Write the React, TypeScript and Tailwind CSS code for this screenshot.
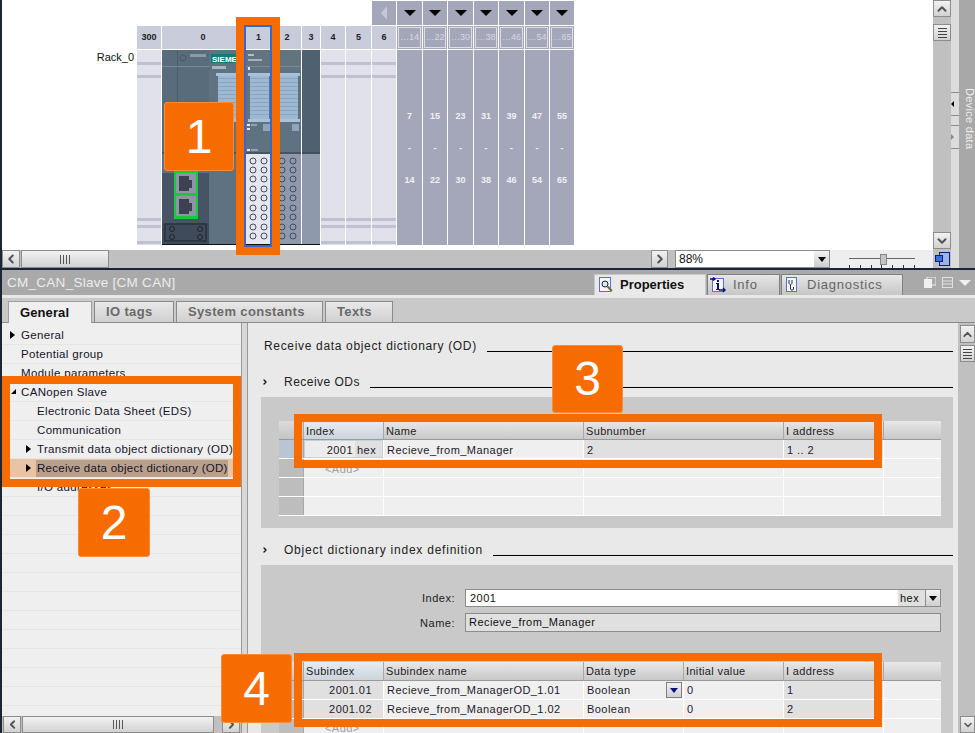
import { ChevronLeft, ChevronRight, ChevronUp, ChevronDown } from 'lucide-react';
import type { ReactNode } from 'react';

const font = { fontFamily: '"Liberation Sans", Arial, sans-serif' };

const slotHeaders = [
  { label: '300', w: 'w-[24px]' },
  { label: '0', w: 'w-[82px]' },
  { label: '1', w: 'w-[27px]' },
  { label: '2', w: 'w-[28px]' },
  { label: '3', w: 'w-[18px]' },
  { label: '4', w: 'w-[24px]' },
  { label: '5', w: 'w-[25px]' },
  { label: '6', w: 'w-[24px]' },
];

const expansion = [
  { range: '…14', from: '7', to: '14', w: 'w-[25px]' },
  { range: '…22', from: '15', to: '22', w: 'w-[24px]' },
  { range: '…30', from: '23', to: '30', w: 'w-[25px]' },
  { range: '…38', from: '31', to: '38', w: 'w-[24px]' },
  { range: '…46', from: '39', to: '46', w: 'w-[25px]' },
  { range: '…54', from: '47', to: '54', w: 'w-[24px]' },
  { range: '…65', from: '55', to: '65', w: 'w-[24px]' },
];

const circleRows = [111, 120, 129, 139, 148, 158, 167, 177, 186];

function EmptySlot({ w }: { w: string }) {
  return (
    <div className={`${w} flex h-full flex-col bg-[#e0e1ea]`}>
      <div className="mt-[12px] h-[3px] bg-[#bfc0d0]" />
      <div className="mt-[10px] h-[3px] bg-[#bfc0d0]" />
      <div className="mt-[140px] h-[3px] bg-[#bfc0d0]" />
      <div className="mt-[4px] h-[3px] bg-[#bfc0d0]" />
      <div className="mt-[13px] h-[3px] bg-[#bfc0d0]" />
    </div>
  );
}

function HeatSink({ x, w }: { x: number; w: number }) {
  const stripes = [];
  for (let y = 28; y < 68; y += 4) {
    stripes.push(<rect key={y} x={x + 2} y={y} width={w - 4} height="1" fill="#8aa6c2" />);
  }
  return (
    <g>
      <rect x={x} y={23} width={w} height={3} fill="#a9c2da" />
      <rect x={x + 2} y={26} width={w - 4} height={43} fill="#9db8d2" />
      {stripes}
      <rect x={x} y={69} width={w} height={3} fill="#a9c2da" />
    </g>
  );
}

function Port({ y }: { y: number }) {
  return (
    <g>
      <rect x={14} y={y} width={20} height={20} fill="#8f95a6" />
      <path d={`M17 ${y + 3}h10v4h3v8h-3v3h-10z`} fill="#3e4150" />
    </g>
  );
}

function RackModules() {
  return (
    <svg width="158" height="195" viewBox="0 0 158 195" className="block">
      <rect width="139" height="195" fill="#5f7282" />
      <rect x="0" width="47" height="102" fill="#596c7c" />
      <rect x="15" width="1" height="102" fill="#4c5c6b" />
      <rect x="0" y="16" width="47" height="1" fill="#7a8a99" />
      <circle cx="21" cy="8" r="3" fill="none" stroke="#48586a" />
      <rect x="28" y="4" width="16" height="3" fill="#8d9aa6" />
      <rect x="49" y="4" width="35" height="9" fill="#137a7a" />
      <text x="50" y="12" fontSize="8" fontWeight="700" fill="#fff" style={font}>SIEMENS</text>
      <rect x="50" y="16" width="14" height="3" fill="#a8b4c0" />
      <rect x="84" y="0" width="55" height="20" fill="#62747f" />
      <rect x="86" y="4" width="6" height="2" fill="#b4bec8" />
      <rect x="86" y="9" width="14" height="2" fill="#a4b0bc" />
      <rect x="84" y="16" width="55" height="1" fill="#7a8a99" />
      <rect x="86" y="17" width="2" height="3" fill="#e6e8ee" />
      <HeatSink x={54} w={30} />
      <HeatSink x={86} w={23} />
      <HeatSink x={110} w={28} />
      <rect x="85" y="74" width="3" height="2" fill="#e6e8ee" />
      <rect x="85" y="78" width="3" height="2" fill="#e6e8ee" />
      <rect x="89" y="74" width="6" height="2" fill="#95a3b1" />
      <rect x="101" y="74" width="8" height="7" fill="#8fa5ba" />
      <rect x="130" y="74" width="7" height="7" fill="#8fa5ba" />
      <rect x="85" y="99" width="3" height="2" fill="#e6e8ee" />
      <rect x="89" y="99" width="7" height="2" fill="#95a3b1" />
      <rect x="0" y="102" width="139" height="2" fill="#4a5562" />
      <rect x="0" y="123" width="47" height="51" fill="#475465" />
      <rect x="0" y="104" width="47" height="19" fill="#5f7282" />
      <rect x="0" y="173" width="47" height="22" fill="#3f4a5a" />
      <rect x="3" y="174" width="41" height="17" fill="none" stroke="#20242f" />
      {[[10, 179], [38, 179], [10, 187], [38, 187]].map(([cx, cy]) => (
        <circle key={`${cx}-${cy}`} cx={cx} cy={cy} r="2.5" fill="none" stroke="#20242f" />
      ))}
      <rect x="12" y="121" width="24" height="48" fill="#17c93c" />
      <Port y={123} />
      <Port y={146} />
      <rect x="83" y="104" width="27" height="91" fill="#e5e6ee" />
      <rect x="110" y="104" width="29" height="91" fill="#8e9aab" />
      {circleRows.map((cy) => (
        <g key={cy} fill="none" stroke="#444c5c">
          <circle cx="91" cy={cy} r="3" />
          <circle cx="102" cy={cy} r="3" />
          <circle cx="120" cy={cy} r="3" />
          <circle cx="131" cy={cy} r="3" />
        </g>
      ))}
      <rect x="139" width="1" height="195" fill="#fff" />
      <rect x="140" width="18" height="102" fill="#4f6070" />
      <rect x="140" y="102" width="18" height="2" fill="#434e5b" />
      <rect x="140" y="104" width="18" height="91" fill="#8e9aab" />
      <rect x="0" y="194" width="158" height="1" fill="#111" />
    </svg>
  );
}

function ScrollButton({ children, className }: { children: ReactNode; className: string }) {
  return (
    <div className={`flex items-center justify-center border border-[#8c8c8c] bg-linear-to-b from-[#f2f2f2] to-[#d2d2d2] text-[#555] ${className}`}>
      {children}
    </div>
  );
}

function GripV() {
  return (
    <div className="flex gap-[2px]">
      <span className="h-[9px] w-px bg-[#555]" />
      <span className="h-[9px] w-px bg-[#555]" />
      <span className="h-[9px] w-px bg-[#555]" />
      <span className="h-[9px] w-px bg-[#555]" />
    </div>
  );
}

function GripH() {
  return (
    <div className="flex flex-col gap-[2px]">
      <span className="h-px w-[9px] bg-[#444]" />
      <span className="h-px w-[9px] bg-[#444]" />
      <span className="h-px w-[9px] bg-[#444]" />
      <span className="h-px w-[9px] bg-[#444]" />
    </div>
  );
}

function CanvasPanel() {
  return (
    <div className="flex h-[268px] shrink-0">
      <div className="flex w-[931px] shrink-0 flex-col">
        <div className="flex h-[250px] bg-white">
          <div className="w-[135px] shrink-0 pr-[3px] pt-[50px] text-right text-[11px] leading-[15px] text-[#111]">Rack_0</div>
          <div className="flex flex-col pt-px">
            <div className="ml-[235px] flex h-[24px] gap-px">
              <div className="flex w-[24px] items-center justify-center bg-[#a4a7ba]">
                <div className="h-0 w-0 border-y-[7px] border-r-[6px] border-y-transparent border-r-[#c5c7d4]" />
              </div>
              {expansion.map((c) => (
                <div key={c.range} className={`${c.w} flex items-center justify-center bg-[#a4a7ba]`}>
                  <div className="h-0 w-0 border-x-[6px] border-t-[6px] border-x-transparent border-t-black" />
                </div>
              ))}
            </div>
            <div className="mt-px flex h-[23px] gap-px">
              {slotHeaders.map((s) => (
                <div key={s.label} className={`${s.w} flex items-center justify-center bg-[#c9ccda] text-[9px] font-bold text-[#222]`}>{s.label}</div>
              ))}
              {expansion.map((c) => (
                <div key={c.range} className={`${c.w} bg-[#a4a7ba] p-px`}>
                  <div className="flex h-full items-center justify-center border border-[#dcdde5] text-[9px] text-[#d6d7e0]">{c.range}</div>
                </div>
              ))}
            </div>
            <div className="mt-px flex h-[195px] gap-px">
              <EmptySlot w="w-[24px]" />
              <RackModules />
              <EmptySlot w="w-[24px]" />
              <EmptySlot w="w-[25px]" />
              <EmptySlot w="w-[24px]" />
              {expansion.map((c) => (
                <div key={c.range} className={`${c.w} flex flex-col items-center bg-[#a4a7ba] pt-[59px] text-[9px] font-bold leading-[14px] text-[#f0f0f4]`}>
                  <span>{c.from}</span>
                  <span className="mt-[18px]">-</span>
                  <span className="mt-[18px]">{c.to}</span>
                </div>
              ))}
            </div>
          </div>
        </div>
        <div className="flex h-[18px] items-stretch bg-[#c0c0c0]">
          <ScrollButton className="w-[18px]"><ChevronLeft size={14} strokeWidth={3.5} /></ScrollButton>
          <ScrollButton className="ml-px w-[88px]"><GripV /></ScrollButton>
          <div className="w-[542px]" />
          <ScrollButton className="w-[17px]"><ChevronRight size={14} strokeWidth={3.5} /></ScrollButton>
          <div className="ml-[7px] flex w-[155px] border border-[#8c8c8c] bg-white">
            <span className="flex-1 pl-[3px] text-[12px] leading-[16px] text-[#111]">88%</span>
            <div className="flex w-[15px] items-center justify-center bg-linear-to-b from-[#f2f2f2] to-[#cfcfcf]">
              <div className="h-0 w-0 border-x-[4px] border-t-[5px] border-x-transparent border-t-black" />
            </div>
          </div>
          <div className="relative flex-1 bg-[#eeeeee]">
            <div className="absolute left-[19px] top-[8px] h-px w-[66px] bg-[#666]" />
            <div className="absolute left-[50px] top-[4px] h-[11px] w-[7px] border border-[#888] bg-[#c4c4c4]" />
            <div className="absolute bottom-0 left-[19px] flex w-[66px] justify-between">
              {[0, 1, 2, 3, 4, 5, 6].map((t) => (
                <span key={t} className="h-[3px] w-px bg-[#333]" />
              ))}
            </div>
          </div>
        </div>
      </div>
      <div className="flex w-[18px] shrink-0 flex-col bg-[#c0c0c0]">
        <ScrollButton className="h-[17px]"><ChevronUp size={14} strokeWidth={3.5} /></ScrollButton>
        <ScrollButton className="mt-[7px] h-[17px]"><GripH /></ScrollButton>
        <ScrollButton className="mt-[191px] h-[17px]"><ChevronDown size={14} strokeWidth={3.5} /></ScrollButton>
        <div className="flex flex-1 items-center justify-center bg-[#c0c0c0]">
          <svg width="15" height="14" viewBox="0 0 15 14">
            <rect x="4.5" y="0.5" width="10" height="13" fill="#9ab4e8" stroke="#0a1f7a" />
            <rect x="0.5" y="3.5" width="7" height="6" fill="#3c6ee0" stroke="#0a1f7a" />
          </svg>
        </div>
      </div>
      <div className="flex w-[8px] shrink-0 flex-col bg-[#dcdcdc] pt-[92px]">
        <div className="flex h-[24px] items-center border-y border-[#8c8c8c]">
          <div className="h-0 w-0 border-y-[3px] border-r-[3px] border-y-transparent border-r-black" />
        </div>
        <div className="mt-[9px] flex h-[24px] items-center border-y border-[#8c8c8c]">
          <div className="h-0 w-0 border-y-[3px] border-l-[3px] border-y-transparent border-l-[#888]" />
        </div>
      </div>
      <div className="flex flex-1 justify-center bg-[#a8a8a8] pl-[3px] pt-[88px]">
        <span className="h-fit text-[11px] leading-[16px] tracking-[0.3px] text-[#ececec] [writing-mode:vertical-rl]">Device data</span>
      </div>
    </div>
  );
}

function InspectorTab({ icon, label, active, w }: { icon: ReactNode; label: string; active?: boolean; w: string }) {
  return (
    <div className={`${w} flex h-[21px] items-center border-x border-t pl-[2px] text-[13px] ${active ? 'gap-[6px] border-[#c8c8c8] bg-[#e9e9e9] font-bold tracking-[0px] text-[#111]' : 'gap-[7px] border-[#808080] bg-linear-to-b from-[#e6e6e6] to-[#c6c6c6] tracking-[0.75px] text-[#666]'}`}>
      {icon}
      <span>{label}</span>
    </div>
  );
}

function PropertiesIcon() {
  return (
    <svg width="16" height="16" viewBox="0 0 16 16" className="ml-[1px]">
      <rect x="1.5" y="0.5" width="11" height="14" fill="#f4f6ff" stroke="#5a6fd0" />
      <circle cx="7" cy="7" r="3" fill="#dfe8f8" stroke="#222" />
      <path d="M9.5 9.5l4.5 4.5" stroke="#666" strokeWidth="2" />
    </svg>
  );
}

function InfoIcon() {
  return (
    <svg width="16" height="16" viewBox="0 0 16 16">
      <rect x="2.5" y="1.5" width="11" height="13" fill="#f4f6ff" stroke="#5a6fd0" />
      <path d="M0 2h4M3 0.5l2 1.5-2 1.5M9 13h6M13 11l2 2-2 2" stroke="#101060" strokeWidth="1.4" fill="none" />
      <path d="M7 3h2v2h-2zM6 6h3v6h1v1h-4v-1h1v-5h-1z" fill="#101060" />
    </svg>
  );
}

function DiagnosticsIcon() {
  return (
    <svg width="16" height="16" viewBox="0 0 16 16">
      <rect x="2.5" y="0.5" width="10" height="14" fill="#f4f6ff" stroke="#5a6fd0" />
      <path d="M5 3v3c0 2 3 2 3 0V3M6.5 8v4c0 1.5 3 1.5 3 0v-2" stroke="#333" fill="none" />
    </svg>
  );
}

function TitleBar() {
  return (
    <div className="flex h-[25px] shrink-0 items-end bg-[#a9a9a9] pl-[5px]">
      <span className="flex-1 self-center pt-[2px] text-[13.5px] tracking-[0.27px] text-[#ececec]">CM_CAN_Slave [CM CAN]</span>
      <div className="flex gap-px">
        <InspectorTab icon={<PropertiesIcon />} label="Properties" active w="w-[112px]" />
        <InspectorTab icon={<InfoIcon />} label="Info" w="w-[73px]" />
        <InspectorTab icon={<DiagnosticsIcon />} label="Diagnostics" w="w-[122px]" />
      </div>
      <div className="flex w-[72px] items-center gap-[6px] self-stretch pl-[21px]">
        <svg width="12" height="11" viewBox="0 0 12 11">
          <rect x="3" y="0" width="9" height="8" fill="none" stroke="#f0f0f0" />
          <rect x="0" y="2" width="8" height="9" fill="#f0f0f0" />
        </svg>
        <svg width="11" height="11" viewBox="0 0 11 11">
          <rect x="0.5" y="0.5" width="10" height="10" fill="none" stroke="#e0e0e0" />
          <path d="M0 4h11M0 7h11" stroke="#e0e0e0" />
        </svg>
        <div className="h-0 w-0 border-x-[6px] border-t-[6px] border-x-transparent border-t-[#f0f0f0]" />
      </div>
    </div>
  );
}

function TabsBar() {
  const tabs = [
    { label: 'IO tags', w: 'w-[80px]' },
    { label: 'System constants', w: 'w-[147px]' },
    { label: 'Texts', w: 'w-[68px]' },
  ];
  return (
    <div className="flex h-[28px] shrink-0 items-end gap-[2px] border-t-[3px] border-b border-t-[#e8e8e8] border-b-[#8a8a8a] bg-[#c9c9c9] pl-[6px]">
      <div className="-mb-px flex h-[22px] w-[84px] items-center border-x border-t border-[#a0a0a0] bg-[#efefef] pl-[11px] text-[13px] font-bold tracking-[0.1px] text-[#111]">General</div>
      {tabs.map((t) => (
        <div key={t.label} className={`${t.w} flex h-[21px] items-center border-x border-t border-[#8a8a8a] bg-linear-to-b from-[#e8e8e8] to-[#d0d0d0] pl-[11px] text-[13px] font-bold tracking-[0.35px] text-[#6a6a6a]`}>{t.label}</div>
      ))}
    </div>
  );
}

const navRows: { label: string; indent: string; arrow?: 'right' | 'down'; selected?: boolean }[] = [
  { label: 'General', indent: 'pl-[19px]', arrow: 'right' },
  { label: 'Potential group', indent: 'pl-[19px]' },
  { label: 'Module parameters', indent: 'pl-[19px]' },
  { label: 'CANopen Slave', indent: 'pl-[19px]', arrow: 'down' },
  { label: 'Electronic Data Sheet (EDS)', indent: 'pl-[35px]' },
  { label: 'Communication', indent: 'pl-[35px]' },
  { label: 'Transmit data object dictionary (OD)', indent: 'pl-[35px]', arrow: 'right' },
  { label: 'Receive data object dictionary (OD)', indent: 'pl-[35px]', arrow: 'right', selected: true },
  { label: 'I/O addresses', indent: 'pl-[35px]' },
];

function NavTree() {
  return (
    <div className="flex w-[239px] shrink-0 flex-col bg-[#efefef]">
      <div className="h-[393px] shrink-0 overflow-hidden pt-[3px]">
        {navRows.map((r) => (
          <div key={r.label} className={`relative flex h-[19px] items-center whitespace-nowrap border-b border-[#e6e6e6] text-[11.5px] tracking-[0.33px] text-[#14142a] ${r.indent} ${r.selected ? 'bg-[#e8c4a5]' : 'pt-[2px]'}`}>
            {r.arrow === 'right' && (
              <div className={`absolute top-[5px] h-0 w-0 border-y-[4px] border-l-[5px] border-y-transparent border-l-black ${r.selected || r.label.startsWith('Transmit') ? 'left-[24px]' : 'left-[8px]'}`} />
            )}
            {r.arrow === 'down' && (
              <div className="absolute left-[9px] top-[6px] h-0 w-0 border-b-[5px] border-l-[5px] border-b-black border-l-transparent" />
            )}
            <span className={r.selected ? '-ml-px bg-[#b8a08e] pl-px pr-0 leading-[17px] tracking-[0.26px]' : ''}>{r.label}</span>
          </div>
        ))}
        {Array.from({ length: 12 }, (_, i) => (
          <div key={i} className="h-[19px] border-b border-[#e6e6e6]" />
        ))}
      </div>
      <div className="flex flex-1 items-stretch bg-[#c0c0c0] pl-px">
        <ScrollButton className="w-[18px]"><ChevronLeft size={13} strokeWidth={3.5} /></ScrollButton>
        <ScrollButton className="ml-px w-[192px]"><GripV /></ScrollButton>
        <div className="w-[8px]" />
        <ScrollButton className="w-[18px]"><ChevronRight size={13} strokeWidth={3.5} /></ScrollButton>
      </div>
    </div>
  );
}

function SectionHeading({ label, chevron, className }: { label: string; chevron?: boolean; className: string }) {
  return (
    <div className={`flex h-[16px] shrink-0 items-start text-[12px] leading-[18px] text-[#222] ${className}`}>
      {chevron && <ChevronRight size={8} strokeWidth={4} className="-ml-[3px] mr-[15px] mt-[5px] text-[#111]" />}
      <span className="whitespace-nowrap">{label}</span>
      <div className="ml-[10px] h-[15px] flex-1 border-b border-black" />
    </div>
  );
}

type Cell = { text?: string; w: string; head?: boolean; readonly?: boolean; muted?: boolean; dropdown?: boolean; node?: ReactNode };

function HeaderRow({ cols, leading }: { cols: { label: string; w: string }[]; leading: string }) {
  return (
    <div className="flex h-[19px] border-b border-[#9a9a9a]">
      <div className="w-[24px] bg-linear-to-b from-[#dcdcdc] to-[#c4c4c4]" />
      {cols.map((c, i) => (
        <div key={i} className={`${c.w} ${leading} border-l border-[#a8a8a8] pl-[2px] text-[11px] tracking-[0.35px] text-[#222] ${i === 0 ? 'bg-linear-to-b from-[#e6ecf2] to-[#ccd4dc]' : 'bg-linear-to-b from-[#e8e8e8] to-[#c8c8c8]'}`}>{c.label}</div>
      ))}
    </div>
  );
}

function DataRow({ cells, selected, leading }: { cells: Cell[]; selected?: boolean; leading: string }) {
  return (
    <div className="flex h-[19px] border-b border-white">
      <div className={`w-[24px] ${selected ? 'bg-[#b9c5d2]' : 'bg-[#bdbdbd]'}`} />
      {cells.map((c, i) => (
        <div key={i} className={`${c.w} ${leading} relative whitespace-nowrap border-l text-[11px] tracking-[0.45px] ${i === 0 ? 'border-[#a8a8a8]' : 'border-white'} ${c.readonly ? 'bg-[#e0e0e0]' : 'bg-[#efefef]'} ${c.head ? 'pr-[11px] text-right' : 'pl-[3px]'} ${c.muted ? 'pl-[21px] text-[#a0a0a0]' : 'text-[#1a1a2a]'}`}>
          {c.node ?? c.text}
          {c.dropdown && (
            <div className="absolute right-px top-[1px] flex h-[16px] w-[16px] items-center justify-center border border-[#808080] bg-linear-to-b from-[#f2f2f2] to-[#cfcfcf]">
              <div className="h-0 w-0 border-x-[4px] border-t-[5px] border-x-transparent border-t-[#10107a]" />
            </div>
          )}
        </div>
      ))}
    </div>
  );
}

function ReceiveOds() {
  const cols = [
    { label: 'Index', w: 'w-[80px]' },
    { label: 'Name', w: 'w-[200px]' },
    { label: 'Subnumber', w: 'w-[200px]' },
    { label: 'I address', w: 'w-[100px]' },
    { label: '', w: 'w-[58px]' },
  ];
  const blank = (text?: string): Cell[] => [
    { w: 'w-[80px]', text, muted: !!text },
    { w: 'w-[200px]' },
    { w: 'w-[200px]' },
    { w: 'w-[100px]' },
    { w: 'w-[58px]' },
  ];
  return (
    <div className="mt-[8px] -ml-[3px] h-[131px] shrink-0 bg-[#c9c9c9] pl-[18px] pr-[12px] pt-[24px]">
      <HeaderRow cols={cols} leading="leading-[20px]" />
      <DataRow
        selected
        leading="leading-[20px]"
        cells={[
          {
            w: 'w-[80px]',
            node: (
              <div className="-ml-[3px] flex h-[18px] border border-[#c4d0dc] bg-[#ececec]">
                <span className="w-[50px] pr-[2px] text-right leading-[18px]">2001</span>
                <span className="flex-1 bg-[#e0e0e0] pl-[2px] leading-[18px]">hex</span>
              </div>
            ),
          },
          { w: 'w-[200px]', text: 'Recieve_from_Manager' },
          { w: 'w-[200px]', text: '2', readonly: true },
          { w: 'w-[100px]', text: '1 .. 2', readonly: true },
          { w: 'w-[58px]' },
        ]}
      />
      <DataRow leading="leading-[20px]" cells={blank('<Add>')} />
      <DataRow leading="leading-[20px]" cells={blank()} />
      <DataRow leading="leading-[20px]" cells={blank()} />
    </div>
  );
}

function IndexDefinition() {
  const cols = [
    { label: 'Subindex', w: 'w-[80px]' },
    { label: 'Subindex name', w: 'w-[200px]' },
    { label: 'Data type', w: 'w-[100px]' },
    { label: 'Initial value', w: 'w-[100px]' },
    { label: 'I address', w: 'w-[100px]' },
    { label: '', w: 'w-[58px]' },
  ];
  const row = (sub: string, name: string, addr: string, dropdown?: boolean): Cell[] => [
    { w: 'w-[80px]', text: sub, head: true, readonly: true },
    { w: 'w-[200px]', text: name },
    { w: 'w-[100px]', text: 'Boolean', dropdown },
    { w: 'w-[100px]', text: '0' },
    { w: 'w-[100px]', text: addr, readonly: true },
    { w: 'w-[58px]' },
  ];
  return (
    <div className="mt-[8px] -ml-[3px] flex-1 bg-[#c9c9c9] pl-[18px] pr-[12px] pt-[24px]">
      <div className="flex h-[18px] items-center">
        <span className="w-[176px] text-right text-[11px] leading-[20px] tracking-[0.5px] text-[#222]">Index:</span>
        <div className="ml-[10px] flex h-[18px] flex-1 border border-[#8c8c8c] bg-white text-[11px] leading-[17px] tracking-[0.45px] text-[#111]">
          <span className="flex-1 pl-[4px]">2001</span>
          <span className="w-[27px] bg-[#e0e0e0] pl-[2px]">hex</span>
          <div className="flex w-[15px] items-center justify-center border-l border-[#8c8c8c] bg-linear-to-b from-[#f2f2f2] to-[#cfcfcf]">
            <div className="h-0 w-0 border-x-[4px] border-t-[5px] border-x-transparent border-t-black" />
          </div>
        </div>
      </div>
      <div className="mt-[6px] flex h-[19px] items-center">
        <span className="w-[176px] text-right text-[11px] leading-[18px] tracking-[0.5px] text-[#222]">Name:</span>
        <div className="ml-[10px] h-[19px] flex-1 border border-[#8c8c8c] bg-[#e0e0e0] pl-[3px] text-[11px] leading-[16px] tracking-[0.45px] text-[#111]">Recieve_from_Manager</div>
      </div>
      <div className="mt-[30px]">
        <HeaderRow cols={cols} leading="leading-[18px]" />
        <DataRow selected leading="leading-[18px]" cells={row('2001.01', 'Recieve_from_ManagerOD_1.01', '1', true)} />
        <DataRow leading="leading-[18px]" cells={row('2001.02', 'Recieve_from_ManagerOD_1.02', '2')} />
        <DataRow
          leading="leading-[18px]"
          cells={[
            { w: 'w-[80px]', text: '<Add>', muted: true },
            { w: 'w-[200px]' },
            { w: 'w-[100px]' },
            { w: 'w-[100px]' },
            { w: 'w-[100px]' },
            { w: 'w-[58px]' },
          ]}
        />
      </div>
    </div>
  );
}

function DetailPane() {
  return (
    <div className="flex min-w-0 flex-1">
      <div className="flex w-[710px] shrink-0 flex-col overflow-hidden bg-[#e9e9e9] pl-[16px] pr-[5px] pt-[14px]">
        <SectionHeading label="Receive data object dictionary (OD)" className="tracking-[0.67px]" />
        <SectionHeading label="Receive ODs" chevron className="mt-[20px] tracking-[0.48px]" />
        <ReceiveOds />
        <SectionHeading label="Object dictionary index definition" chevron className="mt-[13px] tracking-[0.77px]" />
        <IndexDefinition />
      </div>
      <div className="flex flex-1 flex-col bg-[#c0c0c0] pl-[2px] pt-[2px]">
        <ScrollButton className="h-[18px]"><ChevronUp size={13} strokeWidth={3.5} /></ScrollButton>
        <ScrollButton className="mt-[2px] h-[17px]"><GripH /></ScrollButton>
        <div className="flex-1" />
        <ScrollButton className="h-[17px]"><ChevronDown size={12} strokeWidth={3} /></ScrollButton>
      </div>
    </div>
  );
}

function Badge({ n, className }: { n: string; className: string }) {
  return (
    <div className={`absolute flex items-center justify-center rounded-[3px] border border-[#fb8c3c] bg-[#f76c00] text-[48px] leading-none text-white ${className}`}>{n}</div>
  );
}

export default function App() {
  return (
    <div className="relative flex h-[733px] w-[975px] flex-col overflow-hidden border-l-2 border-[#1c2536]" style={font}>
      <CanvasPanel />
      <div className="h-[2px] shrink-0 bg-[#1c2536]" />
      <TitleBar />
      <TabsBar />
      <div className="flex min-h-0 flex-1">
        <NavTree />
        <div className="w-[7px] shrink-0 border-x border-[#9a9a9a] bg-[#d8d8d8]" />
        <DetailPane />
      </div>

      {/* callout frames and numbers drawn over the screenshot */}
      <div className="pointer-events-none absolute left-[234px] top-[17px] h-[238px] w-[44px] border-[8px] border-[#f76c00]">
        <div className="h-full w-full border-[2px] border-[#3a66c8]" />
      </div>
      <div className="pointer-events-none absolute left-0 top-[376px] h-[111px] w-[239px] border-[8px] border-[#f76c00]" />
      <div className="pointer-events-none absolute left-[292px] top-[414px] h-[54px] w-[588px] border-[8px] border-[#f76c00]" />
      <div className="pointer-events-none absolute left-[292px] top-[653px] h-[74px] w-[588px] border-[8px] border-[#f76c00]" />
      <Badge n="1" className="left-[162px] top-[102px] h-[69px] w-[70px]" />
      <Badge n="2" className="left-[76px] top-[488px] h-[69px] w-[72px]" />
      <Badge n="3" className="left-[550px] top-[345px] h-[68px] w-[71px]" />
      <Badge n="4" className="left-[219px] top-[654px] h-[69px] w-[71px]" />
    </div>
  );
}
